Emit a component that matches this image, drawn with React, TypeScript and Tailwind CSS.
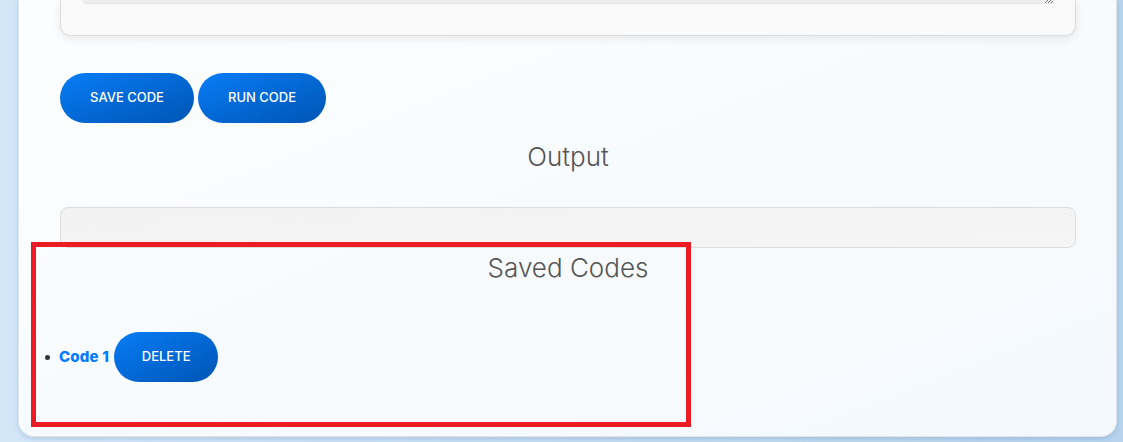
export default function App() {
  return (
    <div className="relative h-[442px] w-full overflow-hidden bg-gradient-to-r from-[#d3e7f9] to-[#b6d4ee] font-['Inter',sans-serif]">
      {/* main card, its top is scrolled away */}
      <div className="ml-[18px] w-[1099px] h-[437px] rounded-b-[16px] border-x border-b border-[#dfe4ea] bg-gradient-to-br from-[#fcfdfe] to-[#f4f9fd] shadow-[0_2px_5px_rgba(40,80,130,0.18)] pl-[41px] pr-[40px]">
        {/* code editor block */}
        <div className="h-[36px] rounded-b-[10px] border-x border-b border-[#dcdcdc] bg-[#f9f9f9] shadow-[0_3px_8px_rgba(0,0,0,0.08)] pl-[22px] pr-[21px]">
          <div className="relative h-[4px] rounded-b-[3px] bg-[#f0efee] border-b border-[#e6e4e3]">
            <svg className="absolute right-[1px] bottom-0" width="11" height="4" viewBox="0 0 11 4">
              <path d="M3 4L7 0M6 4L10 0M9 4L11 2" stroke="#777" strokeWidth="1" />
            </svg>
          </div>
        </div>

        {/* actions */}
        <div className="mt-[37px] flex gap-[4px]">
          <button className="h-[50px] w-[134px] rounded-full bg-gradient-to-br from-[#087df7] to-[#0055b4] text-[13px] font-medium uppercase text-white">
            Save Code
          </button>
          <button className="h-[50px] w-[128px] rounded-full bg-gradient-to-br from-[#087df7] to-[#0055b4] text-[13px] font-medium uppercase text-white">
            Run Code
          </button>
        </div>

        <h2 className="mt-[16px] text-center text-[26px] leading-[36px] font-light text-[#555]">Output</h2>
        <div className="mt-[32px] h-[41px] rounded-[8px] border border-[#dddddd] bg-gradient-to-br from-[#f2f2f2] to-[#f6f5f5]" />

        <h2 className="mt-[2px] text-center text-[26px] leading-[36px] font-light text-[#555]">Saved Codes</h2>
        <ul className="mt-[46px]">
          <li className="-ml-[15px] flex items-center">
            <span className="mr-[9px] h-[5px] w-[5px] rounded-full bg-[#333]" />
            <span className="text-[15px] font-extrabold tracking-[0.2px] text-[#007bff]">Code 1</span>
            <button className="ml-[5px] h-[50px] w-[104px] rounded-full bg-gradient-to-br from-[#087df7] to-[#0055b4] text-[13px] font-medium uppercase text-white">
              Delete
            </button>
          </li>
        </ul>
      </div>

      {/* highlight box */}
      <div className="absolute left-[31px] top-[242px] h-[185px] w-[660px] border-[5px] border-[#ec1c24]" />
    </div>
  );
}
